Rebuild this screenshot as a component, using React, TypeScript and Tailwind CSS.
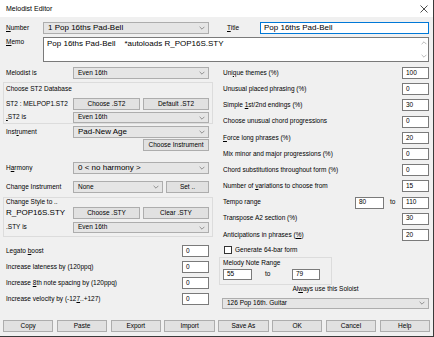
import React from "react";

type P = { children?: React.ReactNode; className?: string };

function Chevron({ up = false, color = "#7a7a7a" }: { up?: boolean; color?: string }) {
  return (
    <svg width="6" height="4" viewBox="0 0 6 4">
      <path
        d={up ? "M0.6 3.2 L3 0.8 L5.4 3.2" : "M0.6 0.8 L3 3.2 L5.4 0.8"}
        fill="none"
        stroke={color}
        strokeWidth="0.8"
      />
    </svg>
  );
}

function Select({ text, className = "", big = false }: { text: string; className?: string; big?: boolean }) {
  return (
    <div className={`flex items-center justify-between bg-[#e5e5e5] border border-[#adadad] pl-[4px] pr-[3px] ${className}`}>
      <span className={`${big ? "text-[8px]" : "text-[6.5px]"} leading-none whitespace-nowrap`}>{text}</span>
      <Chevron />
    </div>
  );
}

function Btn({ children, className = "" }: P) {
  return (
    <div className={`flex items-center justify-center bg-[#e1e1e1] border border-[#adadad] text-[6.5px] leading-none whitespace-nowrap ${className}`}>
      {children}
    </div>
  );
}

function Inp({ children, className = "" }: P) {
  return (
    <div className={`flex items-center bg-white border border-[#7a7a7a] pl-[3px] text-[6.5px] leading-none whitespace-nowrap ${className}`}>
      {children}
    </div>
  );
}

function LRow({ label, children, className = "" }: { label: React.ReactNode; children: React.ReactNode; className?: string }) {
  return (
    <div className={`flex items-center ${className}`}>
      <div className="w-[70px] pl-[3px] text-[6.5px] leading-none whitespace-nowrap">{label}</div>
      {children}
    </div>
  );
}

function RRow({ label, value }: { label: React.ReactNode; value: string }) {
  return (
    <div className="flex items-center justify-between h-[12px]">
      <span className="pl-[1px] text-[6.5px] leading-none whitespace-nowrap">{label}</span>
      <Inp className="w-[27px] h-[12px]">{value}</Inp>
    </div>
  );
}

function NumRow({ label, value, className = "" }: { label: React.ReactNode; value: string; className?: string }) {
  return (
    <div className={`flex items-center justify-between h-[12px] pr-[4px] ${className}`}>
      <span className="pl-[3px] text-[6.5px] leading-none whitespace-nowrap">{label}</span>
      <Inp className="w-[27px] h-[12px]">{value}</Inp>
    </div>
  );
}

export default function App() {
  return (
    <div className="w-[434px] h-[337px] bg-[#f0f0f0] border-r border-b border-[#3a3a3a] overflow-hidden text-black font-['Liberation_Sans',Arial,sans-serif]">
      {/* Title bar */}
      <div className="h-[17px] bg-white flex items-center justify-between pl-[6px] pr-[5px]">
        <span className="text-[7px] leading-none">Melodist Editor</span>
        <svg width="8" height="8" viewBox="0 0 8 8">
          <path d="M0.5 0.5 L7.5 7.5 M7.5 0.5 L0.5 7.5" stroke="#222" strokeWidth="0.8" />
        </svg>
      </div>

      {/* Row 1 */}
      <div className="flex items-center h-[12px] mt-[5px]">
        <span className="ml-[6px] w-[37px] text-[6.5px] leading-none"><u>N</u>umber</span>
        <Select big text="1 Pop 16ths Pad-Bell" className="w-[166px] h-[12px]" />
        <span className="ml-[18px] w-[33px] text-[6.5px] leading-none"><u>T</u>itle</span>
        <div className="flex items-center w-[169px] h-[12px] bg-white border border-[#0078d7] pl-[3px] text-[8px] leading-none whitespace-nowrap">
          Pop 16ths Pad-Bell
        </div>
      </div>

      {/* Memo */}
      <div className="flex mt-[3px] h-[25px]">
        <span className="ml-[6px] w-[37px] pt-[2px] text-[6.5px] leading-none"><u>M</u>emo</span>
        <div className="flex w-[386px] h-[25px] bg-white border border-[#7a7a7a]">
          <div className="flex-1 pl-[3px] pt-[2px] text-[8px] leading-none whitespace-pre">
            {"Pop 16ths Pad-Bell    *autoloads R_POP16S.STY"}
          </div>
          <div className="w-[9px] flex flex-col items-center justify-between py-[3px]">
            <Chevron up color="#a8a8a8" />
            <Chevron color="#a8a8a8" />
          </div>
        </div>
      </div>

      {/* Columns */}
      <div className="flex mt-[5px] h-[253px]">
        {/* Left column */}
        <div className="ml-[3px] w-[210px] flex flex-col">
          <LRow label="Melodist is" className="h-[12px]">
            <Select text="Even 16th" className="w-[136px] h-[12px]" />
          </LRow>

          <div className="mt-[3px] border border-[#dcdcdc] flex flex-col">
            <div className="h-[12px] flex items-center pl-[2px] text-[6.5px] leading-none">Choose ST2 Database</div>
            <div className="mt-[3px] flex items-center h-[12px]">
              <div className="w-[69px] pl-[2px] text-[6.5px] leading-none whitespace-nowrap">ST2 : MELPOP1.ST2</div>
              <Btn className="w-[67px] h-[12px]">Choose .ST2</Btn>
              <Btn className="ml-[3px] w-[66px] h-[12px]">Default .ST2</Btn>
            </div>
            <div className="mt-[2px] flex items-center h-[11px]">
              <div className="w-[69px] pl-[2px] text-[6.5px] leading-none"><u>.</u>ST2 is</div>
              <Select text="Even 16th" className="w-[136px] h-[11px]" />
            </div>
          </div>

          <LRow label={<>Inst<u>r</u>ument</>} className="mt-[2px] h-[12px]">
            <Select big text="Pad-New Age" className="w-[136px] h-[12px]" />
          </LRow>
          <div className="mt-[1px] flex justify-end pr-[4px]">
            <Btn className="w-[66px] h-[12px]">Choose Instrument</Btn>
          </div>

          <LRow label={<>H<u>a</u>rmony</>} className="mt-[11px] h-[12px]">
            <Select big text="0 < no harmony >" className="w-[136px] h-[12px]" />
          </LRow>

          <LRow label="Change Instrument" className="mt-[7px] h-[12px]">
            <Select text="None" className="w-[90px] h-[12px]" />
            <Btn className="ml-[3px] w-[43px] h-[12px]">Set ..</Btn>
          </LRow>

          <div className="mt-[4px] border border-[#dcdcdc] flex flex-col pb-[3px]">
            <div className="h-[8px] flex items-center pl-[2px] text-[6.5px] leading-none">Change Style to ..</div>
            <div className="mt-[1px] flex items-center h-[12px]">
              <div className="w-[69px] pl-[2px] text-[8px] leading-none whitespace-nowrap">R_POP16S.STY</div>
              <Btn className="w-[67px] h-[12px]">Choose .STY</Btn>
              <Btn className="ml-[3px] w-[66px] h-[12px]">Clear .STY</Btn>
            </div>
            <div className="mt-[3px] flex items-center h-[11px]">
              <div className="w-[69px] pl-[2px] text-[6.5px] leading-none">.STY is</div>
              <Select text="Even 16th" className="w-[136px] h-[11px]" />
            </div>
          </div>

          <NumRow className="mt-[8px]" label={<>Legato <u>b</u>oost</>} value="0" />
          <NumRow className="mt-[4px]" label="Increase lateness by (120ppq)" value="0" />
          <NumRow className="mt-[4px]" label={<>Increase <u>8</u>th note spacing by (120ppq)</>} value="0" />
          <NumRow className="mt-[4px]" label={<>Increase velocity by (-12<u>7</u>..+127)</>} value="0" />
        </div>

        {/* Right column */}
        <div className="ml-[9px] w-[207px] flex flex-col">
          <div className="flex flex-col gap-[4.2px]">
            <RRow label={<>Uni<u>q</u>ue themes (%)</>} value="100" />
            <RRow label="Unusual placed phrasing (%)" value="0" />
            <RRow label={<>Simple <u>1</u>st/2nd endings (%)</>} value="30" />
            <RRow label="Choose unusual chord progressions" value="0" />
            <RRow label={<><u>F</u>orce long phrases (%)</>} value="20" />
            <RRow label="Mix minor and major progressions (%)" value="0" />
            <RRow label="Chord substitutions throughout form (%)" value="0" />
            <RRow label={<>Number of <u>v</u>ariations to choose from</>} value="15" />
            <div className="flex items-center h-[12px]">
              <span className="pl-[1px] text-[6.5px] leading-none flex-1">Tempo range</span>
              <Inp className="w-[29px] h-[12px]">80</Inp>
              <span className="w-[18px] pl-[6px] text-[6.5px] leading-none">to</span>
              <Inp className="w-[27px] h-[12px]">110</Inp>
            </div>
            <RRow label="Transpose A2 section (%)" value="30" />
            <RRow label={<>Anticipations in phrases (<u>%</u>)</>} value="20" />
          </div>

          <div className="mt-[4px] h-[10px] flex items-center pl-[2px]">
            <div className="w-[8px] h-[8px] bg-white border border-[#333]" />
            <span className="ml-[3px] text-[6.5px] leading-none">Generate 64-bar form</span>
          </div>

          <div className="mt-[2px] ml-[-3px] w-[113px] h-[28px] border border-[#dcdcdc] flex flex-col pl-[3px]">
            <div className="h-[10px] flex items-center text-[6.5px] leading-none">Melody Note Range</div>
            <div className="mt-[1px] flex items-center h-[11px]">
              <Inp className="w-[29px] h-[11px]">55</Inp>
              <span className="ml-[13px] w-[27px] text-[6.5px] leading-none">to</span>
              <Inp className="w-[28px] h-[11px]">79</Inp>
            </div>
          </div>

          <div className="h-[8px] flex items-center justify-center text-[6.5px] leading-none">
            Al<u>w</u>ays use this Soloist
          </div>
          <Select text="126 Pop 16th. Guitar" className="mt-[5px] w-[207px] h-[11px]" />
        </div>
      </div>

      {/* Bottom buttons */}
      <div className="grid grid-cols-8 gap-[3.4px] px-[3px] h-[12px]">
        <Btn className="h-[12px]">Copy</Btn>
        <Btn className="h-[12px]">Paste</Btn>
        <Btn className="h-[12px]">Export</Btn>
        <Btn className="h-[12px]">Import</Btn>
        <Btn className="h-[12px]">Save As</Btn>
        <Btn className="h-[12px] border-[#0078d7]">OK</Btn>
        <Btn className="h-[12px]">Cancel</Btn>
        <Btn className="h-[12px]">Help</Btn>
      </div>
    </div>
  );
}
